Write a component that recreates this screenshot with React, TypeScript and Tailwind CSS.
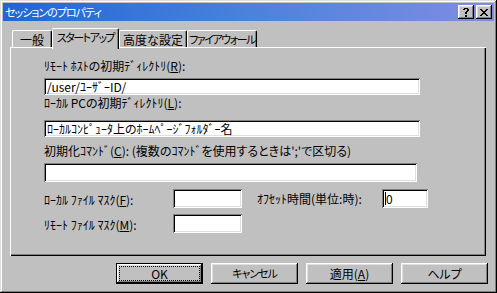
import React from "react";

const RAISED =
  "shadow-[inset_-1px_-1px_#000,inset_1px_1px_#fff,inset_-2px_-2px_#808080,inset_2px_2px_#dfdfdf]";

function TitleBtn({ children }: { children: React.ReactNode }) {
  return (
    <div className={`w-[16px] h-[14px] bg-[#c0c0c0] flex items-center justify-center ${RAISED}`}>
      {children}
    </div>
  );
}

function Field({ cls, children }: { cls: string; children?: React.ReactNode }) {
  return (
    <div
      className={`${cls} bg-white flex items-center pl-[3px] shadow-[inset_1px_1px_#808080,inset_-1px_-1px_#fff,inset_2px_2px_#000,inset_-2px_-2px_#dfdfdf]`}
    >
      {children}
    </div>
  );
}

function Tab({
  label,
  cls,
  textCls,
  selected,
}: {
  label: string;
  cls: string;
  textCls: string;
  selected?: boolean;
}) {
  return (
    <div
      className={`${cls} bg-[#c0c0c0] border-t border-l border-white border-r border-r-black rounded-t-[2px] shadow-[inset_-1px_0_#808080] flex justify-center ${
        selected ? "h-[21px] pt-[2px] relative z-10" : "h-[17px] mb-[2px] items-center"
      }`}
    >
      <span className={`whitespace-nowrap ${textCls}`}>{label}</span>
    </div>
  );
}

function Btn({ children, def }: { children: React.ReactNode; def?: boolean }) {
  if (def) {
    return (
      <div className="w-[87px] h-[21px] border border-black bg-[#c0c0c0] flex">
        <div className={`flex-1 flex p-[2px] ${RAISED}`}>
          <div className="flex-1 border border-dotted border-black flex items-center justify-center">
            {children}
          </div>
        </div>
      </div>
    );
  }
  return (
    <div className={`w-[87px] h-[21px] bg-[#c0c0c0] flex items-center justify-center ${RAISED}`}>
      {children}
    </div>
  );
}

export default function App() {
  return (
    <div className="w-[497px] h-[293px] bg-[#c0c0c0] p-[3px] flex flex-col font-['Noto_Sans_CJK_JP',sans-serif] text-[12px] leading-[13px] text-black [font-feature-settings:'palt'] shadow-[inset_-1px_-1px_#000,inset_1px_1px_#dfdfdf,inset_-2px_-2px_#808080,inset_2px_2px_#fff]">
      {/* title bar */}
      <div className="h-[18px] flex items-center bg-linear-to-r from-[#1c66d6] via-[#4a82dc] to-[#7e8de2] pl-[2px] pr-[2px]">
        <span className="text-white text-[11px] tracking-[-1px]">セッションのプロパティ</span>
        <div className="ml-auto flex gap-[2px]">
          <TitleBtn>
            <svg width="6" height="9" viewBox="0 0 6 9" shapeRendering="crispEdges">
              <path
                d="M1 0h4v1h-4zM0 1h2v1h-2zM4 1h2v1h-2zM4 2h2v1h-2zM3 3h2v1h-2zM2 4h2v1h-2zM2 5h2v1h-2zM2 7h2v2h-2z"
                fill="#000"
              />
            </svg>
          </TitleBtn>
          <TitleBtn>
            <svg width="8" height="7" viewBox="0 0 8 7" shapeRendering="crispEdges">
              <path
                d="M0 0h2v1h-2zM6 0h2v1h-2zM1 1h2v1h-2zM5 1h2v1h-2zM2 2h4v1h-4zM3 3h2v1h-2zM2 4h4v1h-4zM1 5h2v1h-2zM5 5h2v1h-2zM0 6h2v1h-2zM6 6h2v1h-2z"
                fill="#000"
              />
            </svg>
          </TitleBtn>
        </div>
      </div>

      {/* tabs */}
      <div className="mt-[7px] ml-[9px] h-[21px] -mb-[2px] flex items-end relative z-10">
        <Tab label="一般" cls="w-[40px]" textCls="" />
        <Tab label="スタートアップ" cls="w-[67px]" textCls="text-[11px] tracking-[-1.5px]" selected />
        <Tab label="高度な設定" cls="w-[68px]" textCls="" />
        <Tab label="ファイアウォール" cls="w-[70px]" textCls="text-[11px] tracking-[-1.5px]" />
      </div>

      {/* panel */}
      <div className="ml-[7px] w-[476px] h-[209px] shadow-[inset_1px_1px_#fff,inset_-1px_-1px_#000,inset_-2px_-2px_#808080] flex flex-col pl-[34px] pt-[12px]">
        <div className="h-[13px] whitespace-nowrap">
          ﾘﾓｰﾄ ﾎｽﾄの初期ﾃﾞｨﾚｸﾄﾘ(<u>R</u>):
        </div>
        <Field cls="mt-[6px] w-[376px] h-[17px]">
          <span className="whitespace-nowrap">/user/ﾕｰｻﾞｰID/</span>
        </Field>
        <div className="mt-[1px] h-[13px] whitespace-nowrap">
          ﾛｰｶﾙ PCの初期ﾃﾞｨﾚｸﾄﾘ(<u>L</u>):
        </div>
        <Field cls="mt-[11px] w-[376px] h-[17px]">
          <span className="whitespace-nowrap">ﾛｰｶﾙｺﾝﾋﾟｭｰﾀ上のﾎｰﾑﾍﾟｰｼﾞﾌｫﾙﾀﾞｰ名</span>
        </Field>
        <div className="mt-[7px] h-[13px] whitespace-nowrap">
          初期化ｺﾏﾝﾄﾞ(<u>C</u>): (複数のｺﾏﾝﾄﾞを使用するときは';'で区切る)
        </div>
        <Field cls="mt-[6px] w-[373px] h-[19px]" />

        <div className="mt-[7px] h-[19px] flex items-center">
          <div className="w-[129px] whitespace-nowrap pt-[2px]">
            ﾛｰｶﾙ ﾌｧｲﾙ ﾏｽｸ(<u>F</u>):
          </div>
          <Field cls="w-[69px] h-[19px]" />
          <div className="ml-[15px] w-[125px] whitespace-nowrap">ｵﾌｾｯﾄ時間(単位:時):</div>
          <Field cls="w-[46px] h-[19px] pl-[2px]">
            <span className="w-px h-[13px] bg-black" />
            <span>0</span>
          </Field>
        </div>

        <div className="mt-[6px] h-[19px] flex items-center">
          <div className="w-[129px] whitespace-nowrap pt-[1px]">
            ﾘﾓｰﾄ ﾌｧｲﾙ ﾏｽｸ(<u>M</u>):
          </div>
          <Field cls="w-[69px] h-[19px]" />
        </div>
      </div>

      {/* buttons */}
      <div className="mt-[7px] pl-[113px] flex gap-[8px]">
        <Btn def>OK</Btn>
        <Btn>
          <span className="text-[11px] tracking-[-1px]">キャンセル</span>
        </Btn>
        <Btn>
          適用(<u>A</u>)
        </Btn>
        <Btn>ヘルプ</Btn>
      </div>
    </div>
  );
}
